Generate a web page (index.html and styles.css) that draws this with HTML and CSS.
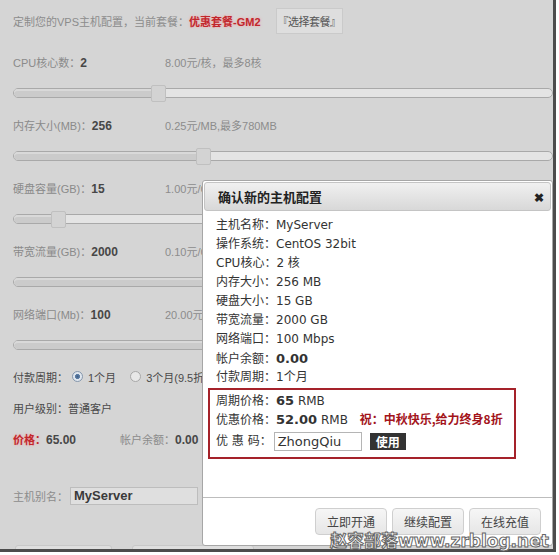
FILE: index.html
```html
<!DOCTYPE html>
<html lang="zh">
<head>
<meta charset="UTF-8" />
<title>定制VPS主机配置</title>
<link rel="stylesheet" href="styles.css">
</head>
<body>
<div class="frame">

  <div class="page">
    <div class="top">
      <span class="muted">定制您的VPS主机配置，当前套餐：</span><span class="plan">优惠套餐-GM2</span>
      <button class="pick">『选择套餐』</button>
    </div>

    <div class="field"><span class="label">CPU核心数：<b>2</b></span><span class="muted">8.00元/核，最多8核</span></div>
    <div class="slider-row"><div class="slider"><div class="fill" style="width:138px"></div><span class="handle" style="left:137px"></span></div></div>

    <div class="field"><span class="label">内存大小(MB)：<b>256</b></span><span class="muted">0.25元/MB,最多780MB</span></div>
    <div class="slider-row"><div class="slider"><div class="fill" style="width:184px"></div><span class="handle" style="left:182px"></span></div></div>

    <div class="field"><span class="label">硬盘容量(GB)：<b>15</b></span><span class="muted">1.00元/GB</span></div>
    <div class="slider-row"><div class="slider"><div class="fill" style="width:38px"></div><span class="handle" style="left:37px"></span></div></div>

    <div class="field"><span class="label">带宽流量(GB)：<b>2000</b></span><span class="muted">0.10元/GB</span></div>
    <div class="slider-row"><div class="slider"><div class="fill" style="width:300px"></div><span class="handle" style="left:300px"></span></div></div>

    <div class="field"><span class="label">网络端口(Mb)：<b>100</b></span><span class="muted">20.00元/Mb</span></div>
    <div class="slider-row"><div class="slider"><div class="fill" style="width:300px"></div><span class="handle" style="left:300px"></span></div></div>

    <div class="field dark">
      <span>付款周期：</span>
      <span class="radio on"></span><span class="opt">1个月</span>
      <span class="radio"></span><span class="opt">3个月(9.5折)</span>
    </div>
    <div class="field dark"><span>用户级别：普通客户</span></div>
    <div class="field price">
      <span class="label"><em>价格：</em><b>65.00</b></span>
      <span class="muted bal">帐户余额：<b>0.00</b></span>
    </div>

    <div class="alias">
      <span class="muted">主机别名：</span><span class="alias-input">MyServer</span>
    </div>

    <div class="bottom-btns"><span></span><span></span></div>
  </div>

  <div class="dialog">
    <div class="dlg-head">确认新的主机配置<span class="close">✖</span></div>
    <div class="dlg-body">
      <p>主机名称：MyServer</p>
      <p>操作系统：CentOS 32bit</p>
      <p>CPU核心：2 核</p>
      <p>内存大小：256 MB</p>
      <p>硬盘大小：15 GB</p>
      <p>带宽流量：2000 GB</p>
      <p>网络端口：100 Mbps</p>
      <p>帐户余额：<b>0.00</b></p>
      <p>付款周期：1个月</p>
      <div class="promo-box">
        <p>周期价格：<b>65</b> RMB</p>
        <p>优惠价格：<b>52.00</b> RMB <span class="promo">祝：中秋快乐,给力终身8折</span></p>
        <p class="coupon"><span>优 惠 码：</span><span class="code">ZhongQiu</span><span class="use">使用</span></p>
      </div>
    </div>
    <div class="dlg-foot">
      <button>立即开通</button>
      <button>继续配置</button>
      <button>在线充值</button>
    </div>
  </div>
</div>
<div class="watermark">赵容部落www.zrblog.net</div>
</body>
</html>
```

FILE: styles.css
```css
body { position: relative; margin: 0; background: #fff; font-family: "Liberation Sans", "Noto Sans CJK SC", sans-serif; }
.frame { position: relative; width: 553px; height: 549px; background: #d5d5d5; border-right: 3px solid #4c4c4c; border-bottom: 3px solid #4c4c4c; overflow: hidden; }
.page { padding: 8px 0 0 13px; font-size: 11px; color: #8a8a8a; }
.muted { color: #8c8c8c; }
b { color: #474747; }

.top { display: flex; align-items: center; height: 26px; }
.plan { color: #c1272d; font-weight: bold; text-shadow: 0 0 3px #f2a0a0; }
.pick { margin-left: 15px; width: 67px; height: 26px; padding: 0; background: #dedede; border: 1px solid #cacaca; color: #555; font: 11px "Noto Sans CJK SC", sans-serif; white-space: nowrap; letter-spacing: -0.5px; }

.field { display: flex; align-items: center; height: 31px; }
.top + .field { margin-top: 12px; }
.field .label { width: 152px; }
.field b { font-size: 12px; }
.field.dark { color: #4a4a4a; font-size: 11px; }
.slider-row { display: flex; align-items: center; height: 32px; }
.slider { position: relative; width: 540px; height: 8px; border: 1px solid #a9a9a9; border-radius: 5px; background: #e4e4e4; }
.fill { height: 100%; background: #cbcbcb; border-radius: 5px 0 0 5px; box-shadow: inset 0 2px 0 #d9d9d9; }
.handle { position: absolute; top: -4px; width: 13px; height: 15px; background: #d3d3d3; border: 1px solid #c0c0c0; border-radius: 2px; }

.radio { width: 9px; height: 9px; margin: 0 5px 0 4px; border: 1px solid #a8a8a8; border-radius: 50%; background: #e8e8e8; }
.radio.on { background: radial-gradient(circle, #3f5f86 0, #5f7fa6 35%, #dfe6ee 45%); border-color: #8597ad; }
.opt { margin-right: 10px; }
.price em { font-style: normal; font-weight: bold; color: #c1272d; text-shadow: 0 0 3px #f2a0a0; }
.bal { margin-left: -45px; }

.alias { display: flex; align-items: center; height: 28px; margin-top: 28px; }
.alias-input { width: 120px; height: 16px; margin-left: 2px; padding: 0 3px; background: #dfdfdf; border: 1px solid #bdbdbd; color: #3a3a3a; font-weight: bold; font-size: 13px; line-height: 16px; }

.bottom-btns { display: flex; gap: 20px; margin-top: 35px; padding-left: 2px; }
.bottom-btns span { width: 95px; height: 20px; background: #dedede; border: 1px solid #c8c8c8; border-radius: 3px; }
.bottom-btns span + span { width: 120px; }

.dialog { position: absolute; left: 202px; top: 180px; width: 349px; height: 364px; background: #fff; border: 1px solid #a6a6a6; border-radius: 3px; font: 12px "DejaVu Sans", "Noto Sans CJK SC", sans-serif; color: #333; }
.dlg-head { display: flex; justify-content: space-between; align-items: center; height: 27px; margin: 1px; padding: 0 6px 0 13px; background: linear-gradient(#f0f0f0, #d8d8d8); border: 1px solid #c4c4c4; border-radius: 3px; font: bold 13px "Noto Sans CJK SC", sans-serif; color: #222; }
.close { font-size: 12px; color: #222; }
.dlg-body { padding: 4px 0 0 13px; height: 281px; border-bottom: 1px solid #bdbdbd; }
.dlg-body p { margin: 0; height: 19px; line-height: 19px; }
.dlg-body b { color: #333; font-size: 13px; }
.promo-box { width: 298px; margin: 1px 0 0 -8px; padding: 1px 0 4px 6px; border: 2px solid #a5222a; }
.promo { margin-left: 8px; color: #a3141b; font: bold 12px "Noto Sans CJK SC", sans-serif; }
.coupon { display: flex; align-items: center; height: 23px !important; margin-top: 1px !important; }
.code { width: 80px; height: 17px; margin-left: 2px; padding: 0 3px; border: 1px solid #b5b5b5; line-height: 17px; font-size: 13px; }
.use { margin-left: 8px; padding: 0 6px; height: 17px; line-height: 17px; background: #333; color: #fff; font: bold 12px "Noto Sans CJK SC", sans-serif; }
.dlg-foot { display: flex; justify-content: flex-end; gap: 5px; padding: 10px 11px 0 0; }
.dlg-foot button { width: 72px; height: 27px; padding: 0; background: linear-gradient(#f6f6f6, #e6e6e6); border: 1px solid #cfcfcf; border-radius: 4px; color: #444; font: 12px "Noto Sans CJK SC", sans-serif; }

.watermark { position: absolute; left: 330px; top: 531px; color: #fff; font: bold 17px "DejaVu Sans", "Noto Sans CJK SC", sans-serif; line-height: 20px; -webkit-text-stroke: 1px #666; white-space: nowrap; }
```
